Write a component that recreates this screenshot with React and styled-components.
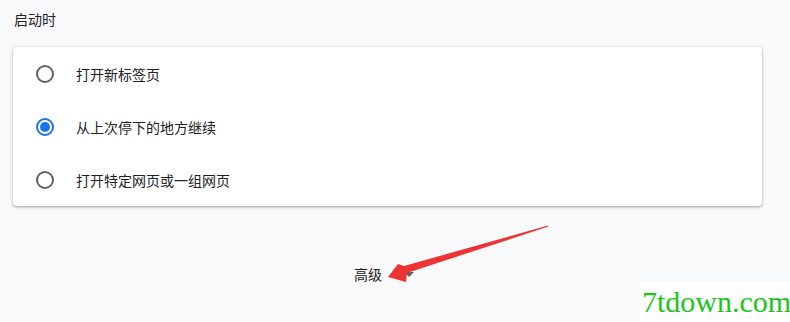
import React, { useState } from 'react'
import styled, { createGlobalStyle } from 'styled-components'

const GlobalStyle = createGlobalStyle`
  html, body {
    margin: 0;
    padding: 0;
    background: #f8f9fa;
    font-family: "Noto Sans CJK SC", "Noto Sans", sans-serif;
    color: #202124;
  }
`

const Page = styled.div`
  position: relative;
  width: 790px;
  height: 322px;
  overflow: hidden;
  padding: 0 28px 0 13px;
  box-sizing: border-box;
`

const Title = styled.div`
  height: 47px;
  padding-top: 9px;
  box-sizing: border-box;
  font-size: 14px;
  line-height: 20px;
  padding-left: 1px;
`

const Card = styled.div`
  background: #fff;
  border-radius: 4px;
  box-shadow: 0 1px 2px 0 rgba(60, 64, 67, 0.3), 0 1px 3px 1px rgba(60, 64, 67, 0.15);
  display: flex;
  flex-direction: column;
`

const Row = styled.label`
  display: flex;
  align-items: center;
  height: 53px;
  padding-left: 23px;
  font-size: 14px;
  cursor: pointer;
`

const Radio = styled.span`
  width: 18px;
  height: 18px;
  border-radius: 50%;
  box-sizing: border-box;
  border: 2px solid ${p => (p.checked ? '#1a73e8' : '#5f6368')};
  display: flex;
  align-items: center;
  justify-content: center;
  margin-right: 22px;
  &::after {
    content: '';
    width: 10px;
    height: 10px;
    border-radius: 50%;
    background: ${p => (p.checked ? '#1a73e8' : 'transparent')};
  }
`

const Advanced = styled.div`
  display: flex;
  justify-content: center;
  align-items: center;
  gap: 22px;
  margin-top: 58px;
  font-size: 14px;
  padding-right: 7px;
`

const Caret = styled.span`
  width: 0;
  height: 0;
  border-left: 5px solid transparent;
  border-right: 5px solid transparent;
  border-top: 5px solid #5f6368;
`

const Arrow = styled.svg`
  position: absolute;
  left: 385px;
  top: 222px;
`

const Watermark = styled.div`
  position: absolute;
  left: 640px;
  top: 282px;
  right: 0;
  bottom: 0;
  background: #fff;
  font-family: "Liberation Serif", serif;
  font-size: 30px;
  color: #1cc41c;
  padding-left: 2px;
  line-height: 40px;
  white-space: nowrap;
`

const options = ['打开新标签页', '从上次停下的地方继续', '打开特定网页或一组网页']

export default function App () {
  const [selected, setSelected] = useState(1)
  return (
    <Page>
      <GlobalStyle />
      <Title>启动时</Title>
      <Card>
        {options.map((text, i) => (
          <Row key={text} onClick={() => setSelected(i)}>
            <Radio checked={selected === i} />
            {text}
          </Row>
        ))}
      </Card>
      <Advanced>
        <span>高级</span>
        <Caret />
      </Advanced>
      <Arrow width='170' height='64' viewBox='0 0 170 64'>
        <path d='M163 3.5 L163.5 4.5 L22 51 L21 60 L3 55 L13 42 L19 44 Z' fill='#ec3434' />
      </Arrow>
      <Watermark>7tdown.com</Watermark>
    </Page>
  )
}
